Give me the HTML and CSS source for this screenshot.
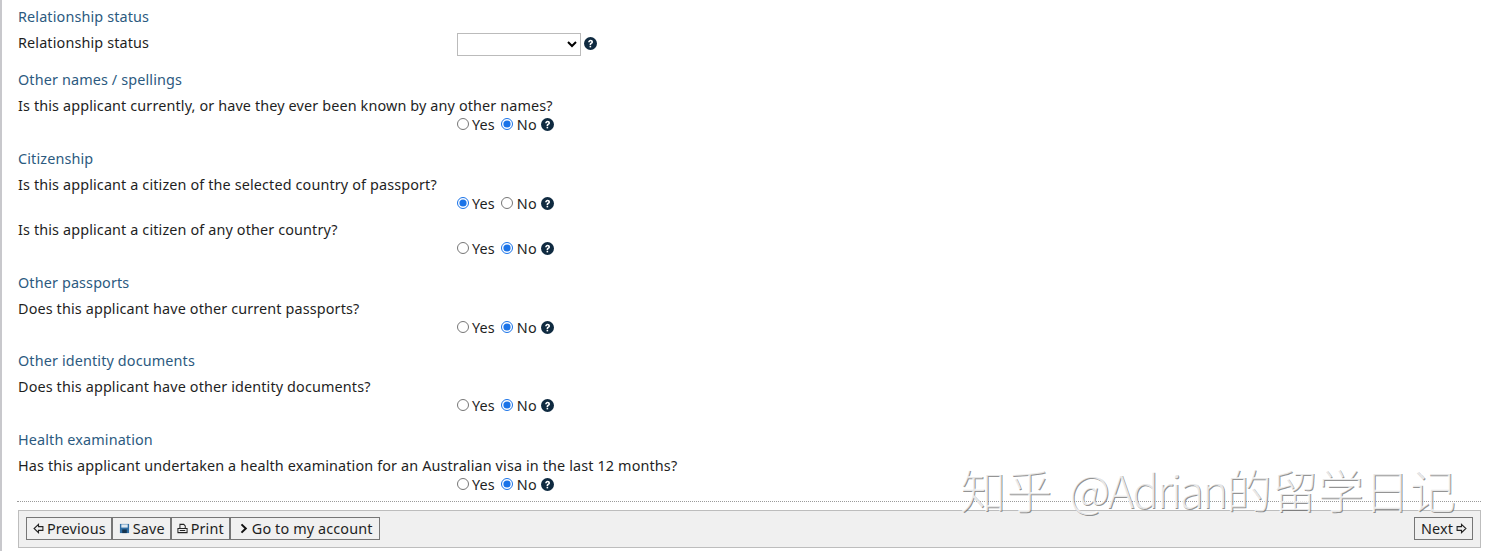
FILE: index.html
```html
<!DOCTYPE html>
<html lang="en">
<head>
<meta charset="utf-8">
<title>Applicant details</title>
<link rel="stylesheet" href="styles.css">
</head>
<body>
<svg class="defs" width="0" height="0" aria-hidden="true">
  <symbol id="help" viewBox="0 0 24 24">
    <circle cx="12" cy="12" r="12" fill="#0f2a40"/>
    <path d="M7.6 9.6C7.9 6.9 9.7 5.2 12.2 5.2c2.6 0 4.4 1.7 4.4 3.9 0 1.8-1 2.7-2.2 3.5-.9.6-1.2 1-1.2 1.9v.4h-2.9v-.7c0-1.7.7-2.6 1.9-3.4 1-.7 1.4-1.1 1.4-1.7 0-.7-.6-1.2-1.4-1.2-.9 0-1.5.6-1.7 1.8z" fill="#fff"/>
    <rect x="10.3" y="16.2" width="2.9" height="2.9" fill="#fff"/>
  </symbol>
</svg>
<main class="page">
  <section class="group group-first">
    <h2 class="heading">Relationship status</h2>
    <div class="row-inline">
      <label class="label" for="rel">Relationship status</label>
      <div class="control">
        <select id="rel" class="select"><option></option></select>
        <svg class="help help-select"><use href="#help"/></svg>
      </div>
    </div>
  </section>

  <section class="group group-second">
    <h2 class="heading">Other names / spellings</h2>
    <div class="question">
      <div class="label">Is this applicant currently, or have they ever been known by any other names?</div>
      <div class="answer">
        <label class="opt"><input type="radio" name="q1">Yes</label>
        <label class="opt"><input type="radio" name="q1" checked>No</label>
        <svg class="help"><use href="#help"/></svg>
      </div>
    </div>
  </section>

  <section class="group">
    <h2 class="heading">Citizenship</h2>
    <div class="question">
      <div class="label">Is this applicant a citizen of the selected country of passport?</div>
      <div class="answer">
        <label class="opt"><input type="radio" name="q2" checked>Yes</label>
        <label class="opt"><input type="radio" name="q2">No</label>
        <svg class="help"><use href="#help"/></svg>
      </div>
    </div>
    <div class="question">
      <div class="label">Is this applicant a citizen of any other country?</div>
      <div class="answer">
        <label class="opt"><input type="radio" name="q3">Yes</label>
        <label class="opt"><input type="radio" name="q3" checked>No</label>
        <svg class="help"><use href="#help"/></svg>
      </div>
    </div>
  </section>

  <section class="group">
    <h2 class="heading">Other passports</h2>
    <div class="question">
      <div class="label">Does this applicant have other current passports?</div>
      <div class="answer">
        <label class="opt"><input type="radio" name="q4">Yes</label>
        <label class="opt"><input type="radio" name="q4" checked>No</label>
        <svg class="help"><use href="#help"/></svg>
      </div>
    </div>
  </section>

  <section class="group">
    <h2 class="heading">Other identity documents</h2>
    <div class="question">
      <div class="label">Does this applicant have other identity documents?</div>
      <div class="answer">
        <label class="opt"><input type="radio" name="q5">Yes</label>
        <label class="opt"><input type="radio" name="q5" checked>No</label>
        <svg class="help"><use href="#help"/></svg>
      </div>
    </div>
  </section>

  <section class="group group-last">
    <h2 class="heading">Health examination</h2>
    <div class="question">
      <div class="label">Has this applicant undertaken a health examination for an Australian visa in the last 12 months?</div>
      <div class="answer">
        <label class="opt"><input type="radio" name="q6">Yes</label>
        <label class="opt"><input type="radio" name="q6" checked>No</label>
        <svg class="help"><use href="#help"/></svg>
      </div>
    </div>
  </section>

  <div class="rule"></div>

  <nav class="toolbar">
    <div class="tools">
      <button class="btn" type="button">
        <svg class="ico" viewBox="0 0 12 12"><path d="M6 1.5 1.2 6 6 10.5V8h4.8V4H6z" fill="none" stroke="#222" stroke-width="1.2"/></svg>Previous</button>
      <button class="btn" type="button">
        <svg class="ico" viewBox="0 0 12 12"><rect x="1" y="1" width="10" height="10" fill="#2f6ea5"/><rect x="2.5" y="1.5" width="7" height="3.5" fill="#dfe9f2"/><rect x="3.5" y="7" width="5" height="4" fill="#16344f"/></svg>Save</button>
      <button class="btn btn-print" type="button">
        <svg class="ico" viewBox="0 0 12 12"><path d="M3.2 6V1.5h4.2L9 3.1V6M1 6h10v4.5H1zM3 8.2h6" fill="none" stroke="#222" stroke-width="1.1"/></svg>Print</button>
      <button class="btn btn-account" type="button">
        <svg class="ico" viewBox="0 0 12 12"><path d="M3.8 1.5 8.5 6 3.8 10.5" fill="none" stroke="#111" stroke-width="2.2"/></svg>Go to my account</button>
    </div>
    <button class="btn" type="button">Next<svg class="ico ico-after" viewBox="0 0 12 12"><path d="M6 1.5 10.8 6 6 10.5V8H1.2V4H6z" fill="none" stroke="#222" stroke-width="1.2"/></svg></button>
  </nav>
</main>
<div class="watermark">知乎<span class="watermark-latin">@Adrian</span>的留学日记</div>
</body>
</html>
```
FILE: styles.css
```css
* { box-sizing: border-box; }
html, body { height: 100%; }
body {
  margin: 0;
  background: #fff;
  color: #1f1f1f;
  font-family: "Noto Sans", "Open Sans", sans-serif;
  font-size: 14.4px;
  line-height: 19px;
  letter-spacing: 0.13px;
  overflow: hidden;
  position: relative;
}
.defs { position: absolute; }
.page {
  margin-left: 2px;
  padding: 7px 14px 0 16px;
  height: 551px;
  box-shadow: -2px 0 0 #c8c8cc;
}
.group { margin-bottom: 14.6px; }
.group-first { margin-bottom: 13.6px; }
.group-second { margin-bottom: 15.6px; }
.group-last { margin-bottom: 0; }
.heading {
  margin: 0;
  font-size: 14.4px;
  font-weight: 400;
  line-height: 19px;
  color: #2c5a80;
}
.row-inline {
  display: flex;
  align-items: flex-start;
  height: 23px;
  margin-top: 7px;
}
.row-inline .label { width: 439px; }
.control { display: flex; align-items: flex-start; }
.select {
  width: 124px;
  height: 23px;
  background: #fff;
  border: 1px solid #bbb;
  border-radius: 0;
  font: inherit;
  margin: 0;
}
.question { margin-top: 7px; }
.answer {
  display: flex;
  align-items: center;
  margin-left: 439px;
  height: 19px;
}
.opt { display: flex; align-items: center; margin-right: 6px; }
.opt input {
  width: 12px;
  height: 12px;
  margin: 0 3px 1px 0;
  accent-color: #1a73e8;
}
.opt + .opt input { margin-right: 4px; }
.help { width: 13px; height: 13px; flex: none; }
.opt + .help { margin-left: -2px; }
.help-select { margin: 4px 0 0 3px; }
.rule {
  border-top: 1px dotted #9a9a9a;
  margin-top: 7px;
  margin-left: -1px;
}
.toolbar {
  display: flex;
  justify-content: space-between;
  align-items: center;
  height: 38px;
  margin-top: 8px;
  padding: 0 7px;
  background: #f0f0f0;
  border: 1px solid #bdbdbd;
}
.tools { display: flex; }
.btn {
  display: flex;
  align-items: center;
  height: 23px;
  padding: 0 5px 0 6px;
  background: #f0f0f0;
  border: 1px solid #767676;
  border-radius: 0;
  color: #1f1f1f;
  font: inherit;
  letter-spacing: inherit;
}
.btn-print { padding: 0 5px 0 5px; }
.btn-account { padding: 0 6px 0 7px; }
.ico { width: 11px; height: 11px; margin-right: 3px; flex: none; }
.ico-after { margin: 0 0 0 3px; }
.watermark {
  position: absolute;
  left: 960px;
  top: 460px;
  font-family: "Noto Sans CJK SC", sans-serif;
  font-size: 46px;
  line-height: 56px;
  letter-spacing: 0;
  font-weight: 300;
  white-space: nowrap;
  color: rgba(255, 255, 255, 0.8);
  text-shadow: 1px 1px 0 rgba(100, 100, 100, 0.7);
}
.watermark-latin {
  margin: 0 0 0 17px;
  font-size: 45px;
  letter-spacing: -2.4px;
}
```
